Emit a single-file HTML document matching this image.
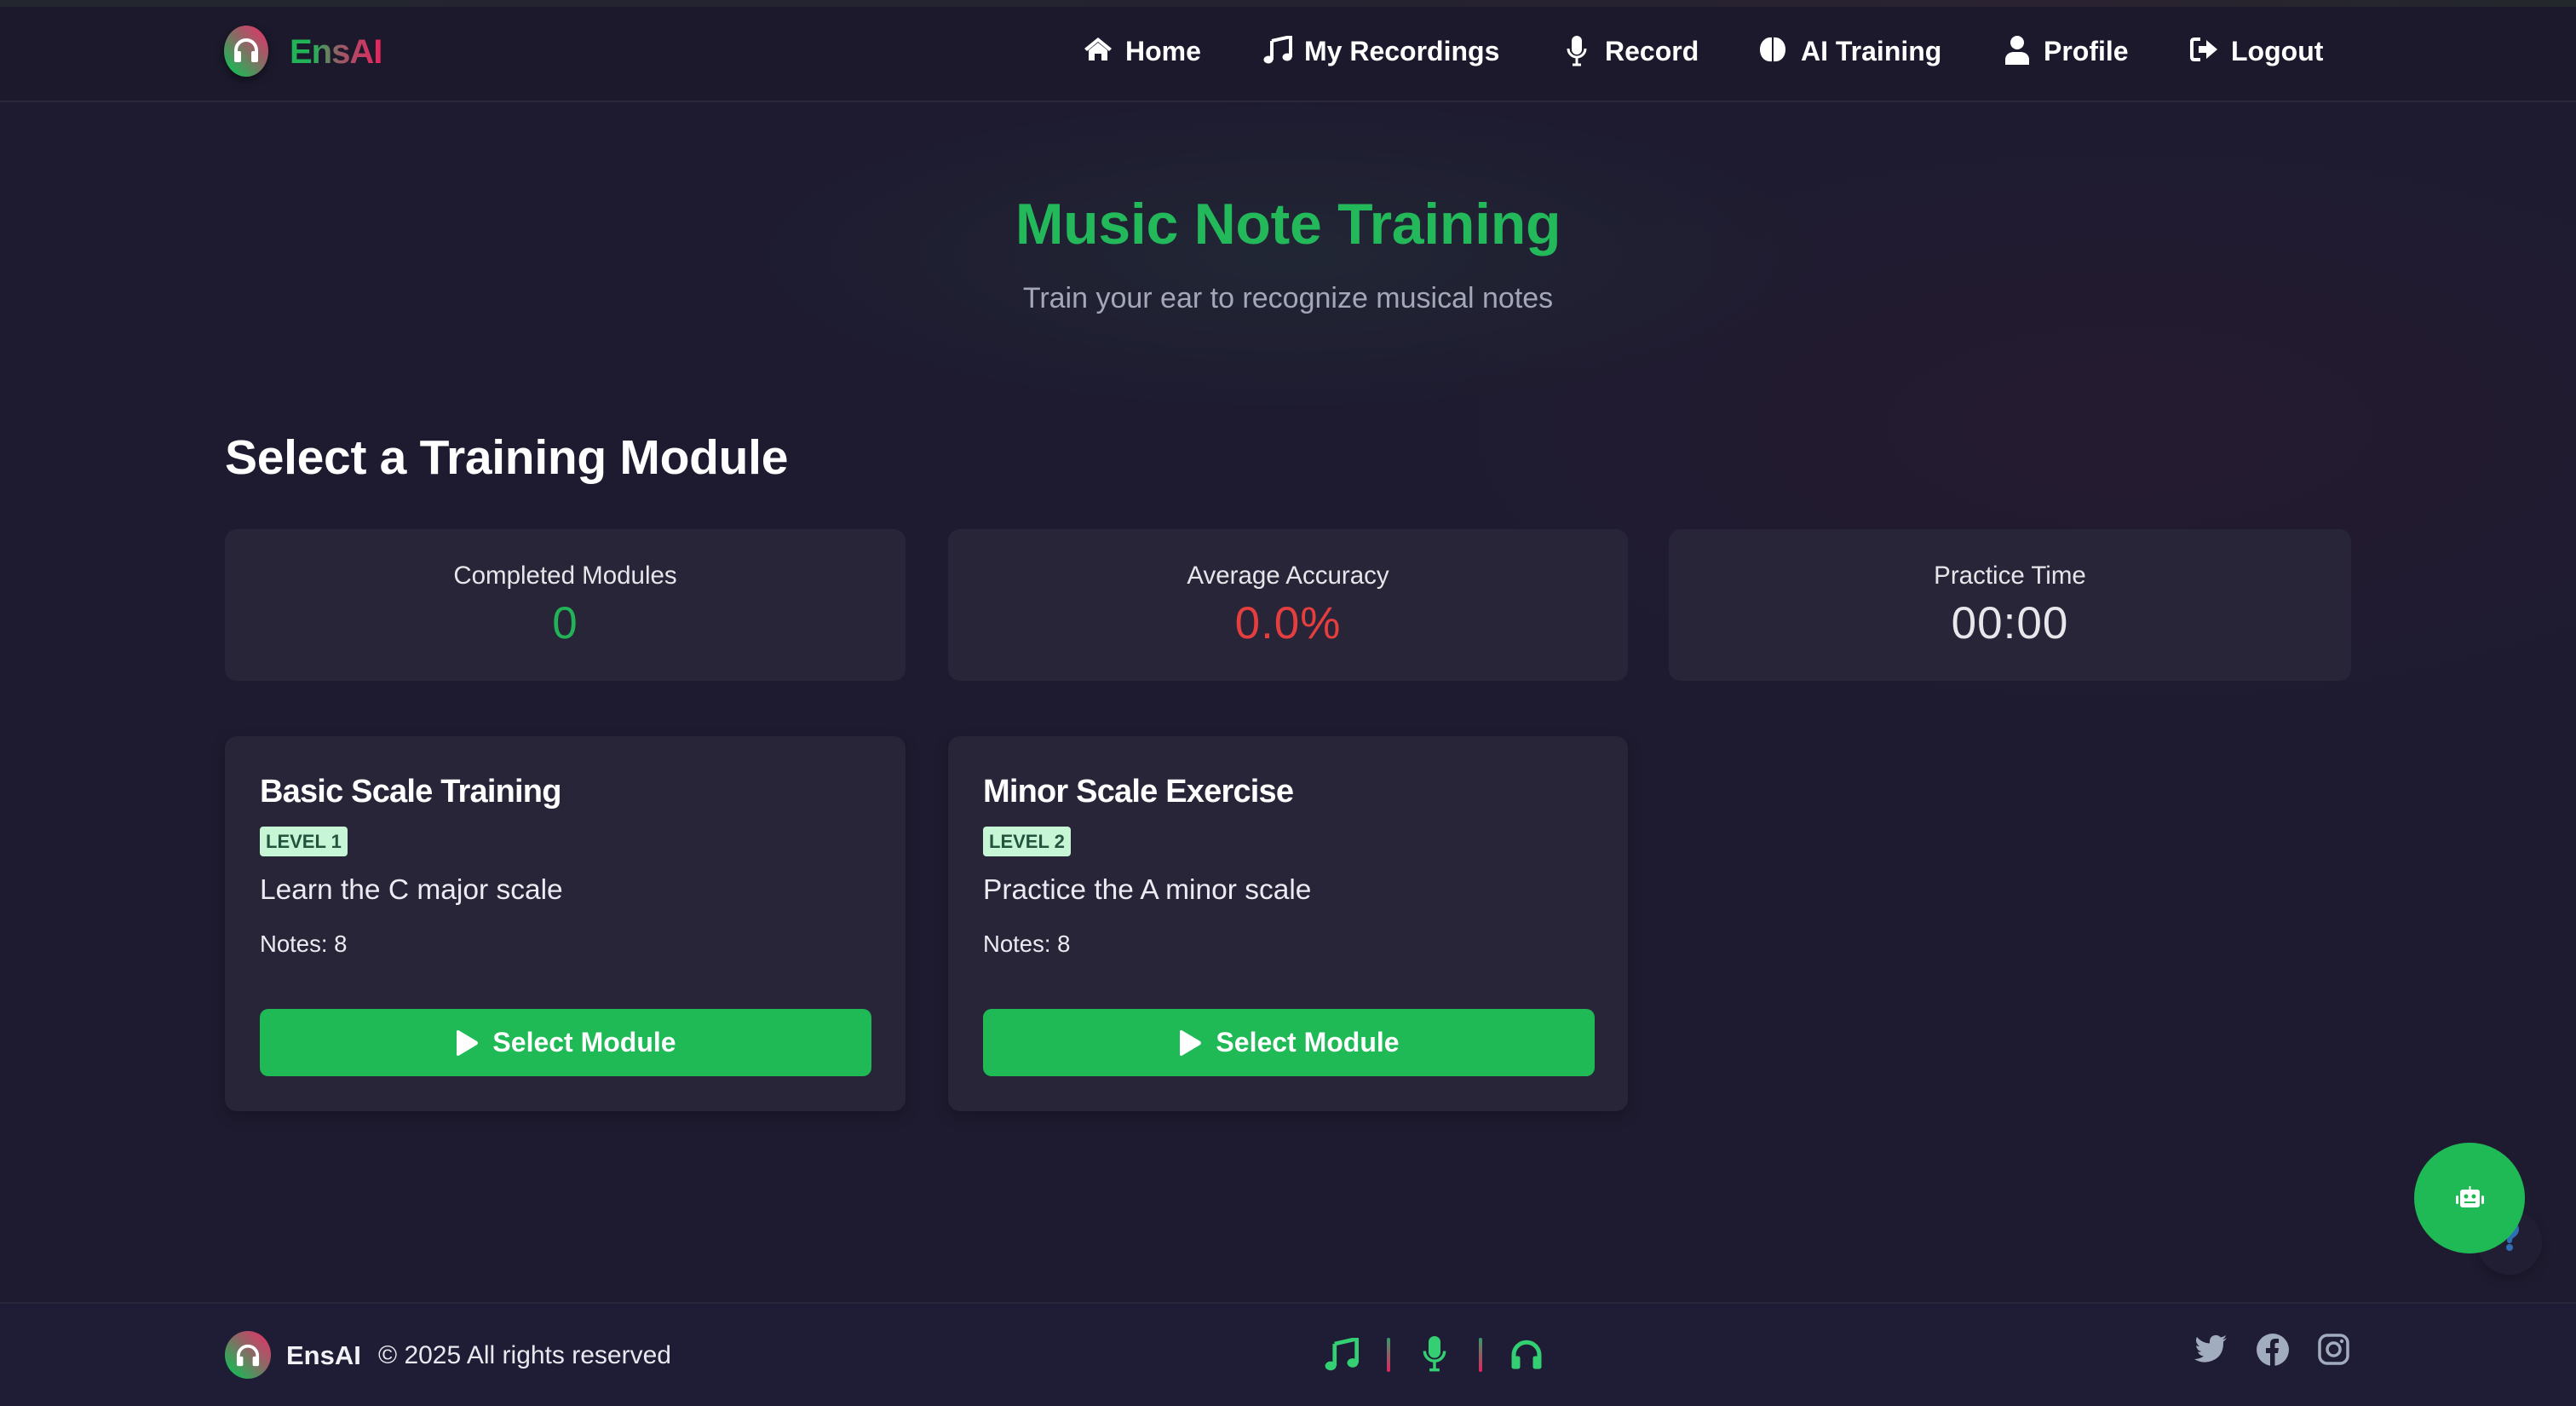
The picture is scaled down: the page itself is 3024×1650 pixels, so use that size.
<!DOCTYPE html>
<html><head><meta charset="utf-8">
<style>
*{margin:0;padding:0;box-sizing:border-box}
html,body{width:3024px;height:1650px;overflow:hidden}
body{font-family:"Liberation Sans",sans-serif;color:#fff;position:relative;
background:
radial-gradient(ellipse 900px 260px at 1512px 300px, rgba(40,60,60,0.35), rgba(0,0,0,0) 70%),
radial-gradient(ellipse 1200px 500px at 2500px 500px, rgba(50,28,50,0.35), rgba(0,0,0,0) 70%),
#1e1b30;}
.topstrip{position:absolute;left:0;top:0;width:3024px;height:8px;background:linear-gradient(90deg,#23262f,#242230 50%,#2a2230 80%,#23282c)}
header{position:absolute;left:0;top:8px;width:3024px;height:112px;background:#1b192b;border-bottom:2px solid #2a2839}
.logo{position:absolute;left:263px;top:22px;width:52px;height:60px;border-radius:50%;background:linear-gradient(45deg,#22b357 15%,#8a6a65 55%,#d93a68 90%);box-shadow:0 4px 10px rgba(0,0,0,.4)}
.logo svg{position:absolute;left:10px;top:13px}
.brand{position:absolute;left:340px;top:31px;font-size:40px;font-weight:700;letter-spacing:-1px;background:linear-gradient(90deg,#22b357 0%,#22b357 25%,#9b5a66 55%,#e8235e 100%);-webkit-background-clip:text;background-clip:text;color:transparent}
.nav{position:absolute;top:-4px;height:112px;display:flex;align-items:center;font-size:32px;font-weight:700;color:#fff}
.nav svg{position:absolute;top:38px}
main h1{position:absolute;left:0;width:3024px;top:224px;text-align:center;font-size:68px;font-weight:700;color:#23b85a;letter-spacing:-0.3px}
.sub{position:absolute;left:0;width:3024px;top:331px;text-align:center;font-size:34px;color:#a3a7b8}
h2{position:absolute;left:264px;top:504px;font-size:57px;font-weight:700;letter-spacing:-0.3px}
.stat{position:absolute;top:621px;width:800px;height:178px;background:#282539;border-radius:14px;text-align:center}
.stat .l{position:absolute;left:0;right:0;top:38px;font-size:29.5px;color:#e6e6ea}
.val{position:absolute;left:0;right:0;top:80px;font-size:53px;letter-spacing:1px}
.card{position:absolute;top:864px;width:800px;height:440px;background:#282539;border-radius:14px;box-shadow:0 6px 16px rgba(0,0,0,.25)}
.card .t{position:absolute;left:41px;top:44px;font-size:38px;font-weight:700;letter-spacing:-0.8px}
.badge{position:absolute;left:41px;top:106px;height:35px;padding:0 7px;background:#c6f6d5;color:#22543d;font-size:22px;font-weight:700;line-height:35px;border-radius:4px}
.card .d{position:absolute;left:41px;top:162px;font-size:33.5px;color:#eceaf2}
.card .n{position:absolute;left:41px;top:228px;font-size:27.5px;color:#eceaf2}
.btn{position:absolute;left:41px;top:320px;width:718px;height:79px;background:#1fb956;border-radius:10px;display:flex;align-items:center;justify-content:center;font-size:32px;font-weight:700;color:#fff}
.btn svg{margin-right:16px}
.q{position:absolute;left:2908px;top:1420px;width:76px;height:76px;border-radius:50%;background:#211e34;box-shadow:0 6px 12px rgba(0,0,0,.2)}
.chat{position:absolute;left:2834px;top:1341px;width:130px;height:130px;border-radius:50%;background:#1fb956}
footer{position:absolute;left:0;top:1528px;width:3024px;height:122px;background:#1f1d35;border-top:2px solid #29273c}
.flogo{position:absolute;left:264px;top:32px;width:54px;height:56px;border-radius:50%;background:linear-gradient(45deg,#22b357 15%,#8a6a65 55%,#d93a68 90%)}
.fb{position:absolute;left:336px;top:43px;font-size:31px;font-weight:700;color:#f2f2f6}
.fc{position:absolute;left:444px;top:44px;font-size:30px;color:#e8e8ee}
.bar{position:absolute;top:40px;width:4px;height:40px;border-radius:2px;background:linear-gradient(#3a9a6a,#e0245e)}
</style></head><body>
<div class="topstrip"></div>
<header>
 <div class="logo"><svg width="32" height="32" viewBox="0 0 32 32"><path d="M4 20 V16 A12 12 0 0 1 28 16 V20" stroke="#fff" stroke-width="4" fill="none"/><rect x="2" y="17" width="8" height="13" rx="2" fill="#fff"/><rect x="22" y="17" width="8" height="13" rx="2" fill="#fff"/></svg></div>
 <div class="brand">EnsAI</div>
 <div class="nav" style="left:0;width:3024px">
  <svg style="left:1272px" width="34" height="30" viewBox="0 0 34 30"><path d="M17 2 L1 15 L4 18 L17 7 L30 18 L33 15 Z" fill="#fff"/><path d="M6 17 L17 8 L28 17 V29 H21 V21 H13 V29 H6 Z" fill="#fff"/></svg>
  <span style="position:absolute;left:1321px">Home</span>
  <svg style="left:1483px" width="34" height="34" viewBox="0 0 34 34"><path d="M10 6 L32 1 V25" stroke="#fff" stroke-width="4" fill="none"/><path d="M10 6 V28" stroke="#fff" stroke-width="4"/><ellipse cx="6" cy="28" rx="5.5" ry="4.5" fill="#fff"/><ellipse cx="28" cy="25" rx="5.5" ry="4.5" fill="#fff"/></svg>
  <span style="position:absolute;left:1531px">My Recordings</span>
  <svg style="left:1838px" width="26" height="36" viewBox="0 0 26 36"><rect x="7" y="0" width="12" height="22" rx="6" fill="#fff"/><path d="M3 15 A10 10 0 0 0 23 15" stroke="#fff" stroke-width="3" fill="none"/><path d="M13 25 V33 M8 34 H18" stroke="#fff" stroke-width="3"/></svg>
  <span style="position:absolute;left:1884px">Record</span>
  <svg style="left:2064px" width="34" height="32" viewBox="0 0 34 32"><path d="M16 2 C8 1 2 8 2 16 C2 25 8 31 16 30 Z" fill="#fff"/><path d="M18 2 C26 1 32 8 32 16 C32 25 26 31 18 30 Z" fill="#fff"/></svg>
  <span style="position:absolute;left:2114px">AI Training</span>
  <svg style="left:2353px" width="30" height="34" viewBox="0 0 30 34"><circle cx="15" cy="8" r="8" fill="#fff"/><path d="M1 34 V28 C1 22 6 19 11 19 H19 C24 19 29 22 29 28 V34 Z" fill="#fff"/></svg>
  <span style="position:absolute;left:2399px">Profile</span>
  <svg style="left:2571px" width="34" height="32" viewBox="0 0 34 32"><path d="M12 4 H5 Q2 4 2 7 V25 Q2 28 5 28 H12" stroke="#fff" stroke-width="4" fill="none"/><path d="M10 12 H19 V5 L32 16 L19 27 V20 H10 Z" fill="#fff"/></svg>
  <span style="position:absolute;left:2619px">Logout</span>
 </div>
</header>
<main>
 <h1>Music Note Training</h1>
 <div class="sub">Train your ear to recognize musical notes</div>
 <h2>Select a Training Module</h2>
 <div class="stat" style="left:264px;width:799px"><div class="l">Completed Modules</div><div class="val" style="color:#22b357">0</div></div>
 <div class="stat" style="left:1113px;width:798px"><div class="l">Average Accuracy</div><div class="val" style="color:#e53e3e">0.0%</div></div>
 <div class="stat" style="left:1959px;width:801px"><div class="l">Practice Time</div><div class="val" style="color:#e8e8ec">00:00</div></div>
 <div class="card" style="left:264px;width:799px"><div class="t">Basic Scale Training</div><div class="badge">LEVEL 1</div><div class="d">Learn the C major scale</div><div class="n">Notes: 8</div><div class="btn"><svg width="28" height="32" viewBox="0 0 28 32"><path d="M2 3 Q2 0 5 1.5 L26 14 Q28 16 26 18 L5 30.5 Q2 32 2 29 Z" fill="#fff"/></svg>Select Module</div></div>
 <div class="card" style="left:1113px;width:798px"><div class="t">Minor Scale Exercise</div><div class="badge">LEVEL 2</div><div class="d">Practice the A minor scale</div><div class="n">Notes: 8</div><div class="btn"><svg width="28" height="32" viewBox="0 0 28 32"><path d="M2 3 Q2 0 5 1.5 L26 14 Q28 16 26 18 L5 30.5 Q2 32 2 29 Z" fill="#fff"/></svg>Select Module</div></div>
</main>
<div class="q"><svg style="position:absolute;left:26px;top:14px" width="24" height="34" viewBox="0 0 24 34"><path d="M4 9 Q4 2 12 2 Q20 2 20 9 Q20 13 15 16 Q12 18 12 22" stroke="#2f6db5" stroke-width="6" fill="none" stroke-linecap="round"/><circle cx="12" cy="30" r="4" fill="#2f6db5"/></svg></div>
<div class="chat"><svg style="position:absolute;left:49px;top:51px" width="33" height="27" viewBox="0 0 33 27"><rect x="5" y="4" width="23" height="21" rx="3" fill="#fff"/><rect x="15.5" y="0" width="2" height="5" fill="#fff"/><rect x="0" y="11" width="3" height="10" rx="1.5" fill="#fff"/><rect x="30" y="11" width="3" height="10" rx="1.5" fill="#fff"/><circle cx="12" cy="12" r="2.5" fill="#1fb956"/><circle cx="21" cy="12" r="2.5" fill="#1fb956"/><rect x="10" y="18" width="13" height="2" fill="#1fb956"/></svg></div>
<footer>
 <div class="flogo"><svg style="position:absolute;left:12px;top:14px" width="30" height="28" viewBox="0 0 32 30"><path d="M4 20 V16 A12 12 0 0 1 28 16 V20" stroke="#fff" stroke-width="4" fill="none"/><rect x="2" y="17" width="8" height="12" rx="2" fill="#fff"/><rect x="22" y="17" width="8" height="12" rx="2" fill="#fff"/></svg></div>
 <div class="fb">EnsAI</div>
 <div class="fc">© 2025 All rights reserved</div>
 <svg style="position:absolute;left:1555px;top:40px" width="40" height="40" viewBox="0 0 34 34"><path d="M10 6 L32 1 V25" stroke="#34cf72" stroke-width="4" fill="none"/><path d="M10 6 V28" stroke="#34cf72" stroke-width="4"/><ellipse cx="6" cy="28" rx="5.5" ry="4.5" fill="#34cf72"/><ellipse cx="28" cy="25" rx="5.5" ry="4.5" fill="#34cf72"/></svg>
 <div class="bar" style="left:1628px"></div>
 <svg style="left:1668px;position:absolute;top:38px" width="32" height="42" viewBox="0 0 26 36"><rect x="7" y="0" width="12" height="22" rx="6" fill="#34cf72"/><path d="M3 15 A10 10 0 0 0 23 15" stroke="#34cf72" stroke-width="3" fill="none"/><path d="M13 25 V33 M8 34 H18" stroke="#34cf72" stroke-width="3"/></svg>
 <div class="bar" style="left:1736px"></div>
 <svg style="position:absolute;left:1772px;top:40px" width="40" height="38" viewBox="0 0 32 30"><path d="M4 20 V16 A12 12 0 0 1 28 16 V20" stroke="#34cf72" stroke-width="4" fill="none"/><rect x="2" y="17" width="8" height="12" rx="2" fill="#34cf72"/><rect x="22" y="17" width="8" height="12" rx="2" fill="#34cf72"/></svg>
 <svg style="position:absolute;left:2576px;top:36px" width="40" height="34" viewBox="0 0 40 34"><path d="M38 4 Q35 6 33 6 Q36 4 37 1 Q34 3 31 3.5 Q28 0.5 24 1 Q18 2 18 9 V10.5 Q9 10 3 3 Q0 9 6 14 Q4 14 2 13 Q3 19 8 20 Q6 21 4 20.5 Q6 25 11 25.5 Q6 29 0 29 Q8 34 17 32 Q34 28 34 10 V8.5 Q36.5 6.5 38 4Z" fill="#a2acbf"/></svg>
 <svg style="position:absolute;left:2648px;top:34px" width="40" height="40" viewBox="0 0 40 40"><circle cx="20" cy="20" r="19" fill="#a2acbf"/><path d="M17 40 V24 H12 V18 H17 V13 Q17 7 23 7 H27 V12 H24 Q22.5 12 22.5 14 V18 H27 L26 24 H22.5 V40 Z" fill="#1f1d35"/></svg>
 <svg style="position:absolute;left:2721px;top:35px" width="37" height="37" viewBox="0 0 37 37"><rect x="2" y="2" width="33" height="33" rx="9" stroke="#a2acbf" stroke-width="3.5" fill="none"/><circle cx="18.5" cy="18.5" r="7.5" stroke="#a2acbf" stroke-width="3.5" fill="none"/><circle cx="28" cy="9" r="2.2" fill="#a2acbf"/></svg>
</footer>
</body></html>
